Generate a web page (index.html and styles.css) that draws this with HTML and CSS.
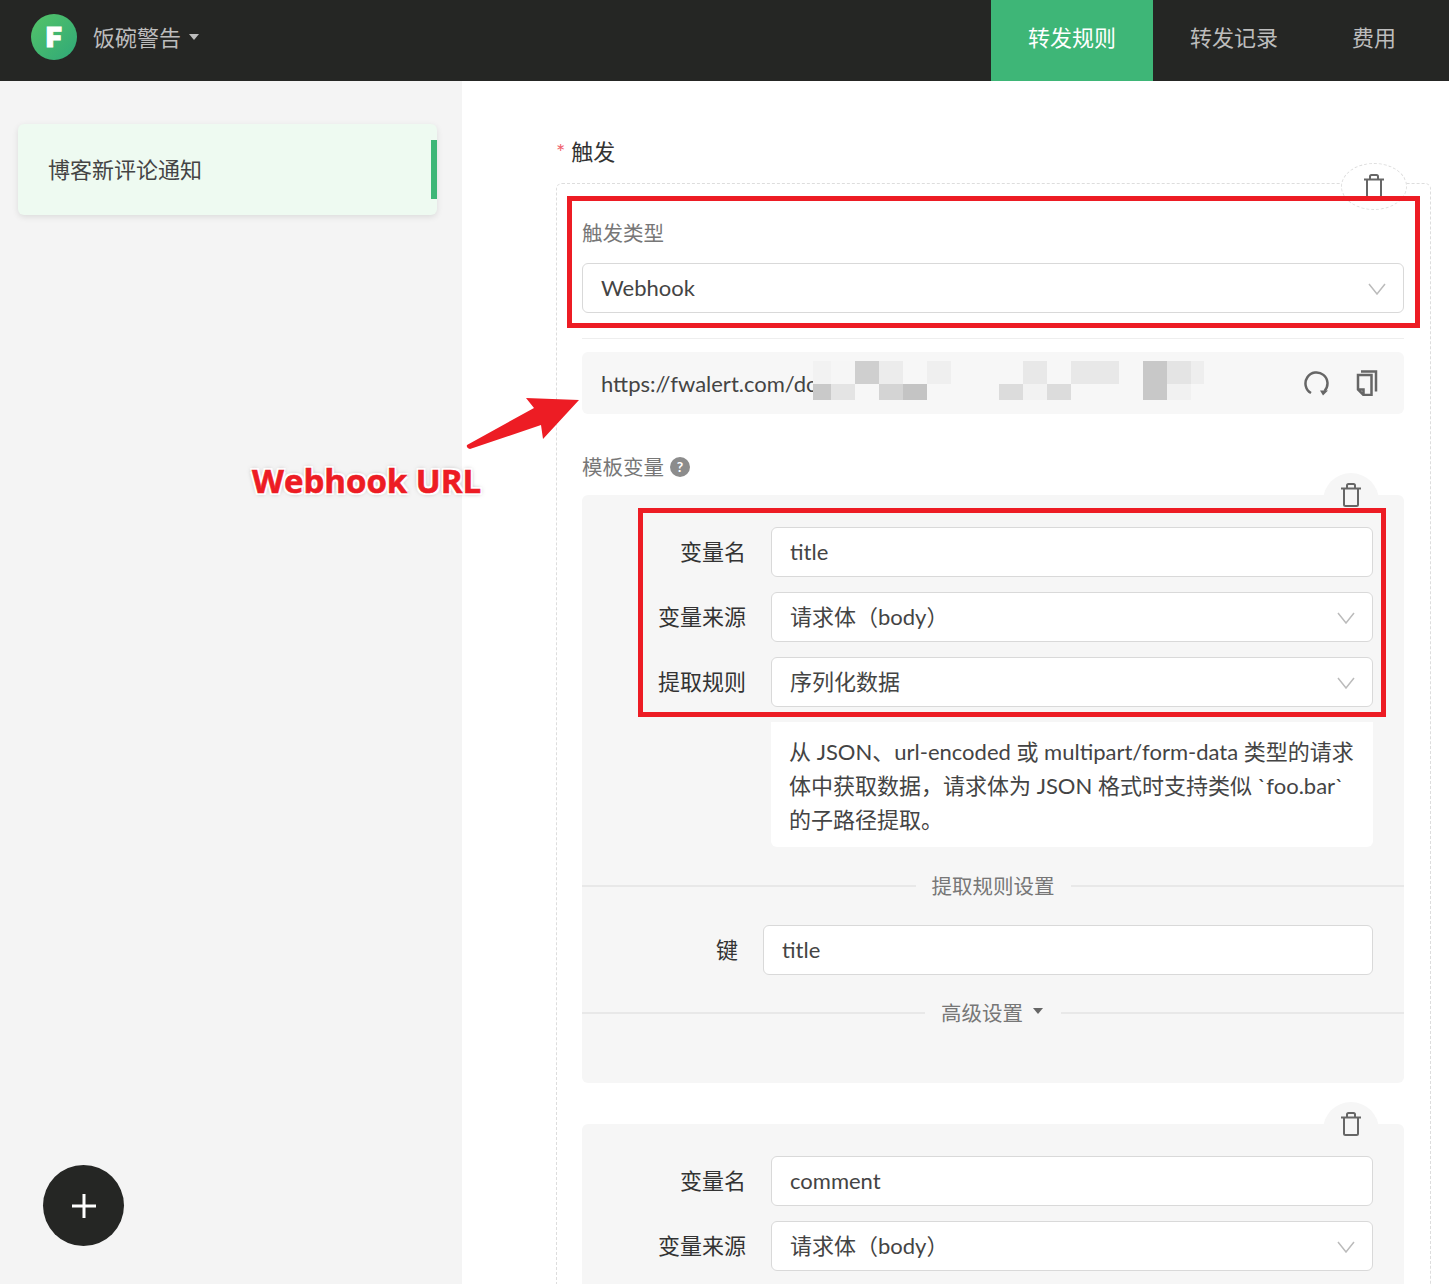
FILE: index.html
```html
<!DOCTYPE html>
<html lang="zh-CN">
<head>
<meta charset="UTF-8">
<meta name="viewport" content="width=device-width, initial-scale=1.0">
<title>饭碗警告 - 转发规则</title>
<link rel="stylesheet" href="styles.css">
</head>
<body>
<header class="topbar">
  <div class="brand">
    <span class="logo">F</span>
    <span class="brand-name">饭碗警告</span>
    <span class="caret"></span>
  </div>
  <nav class="topnav">
    <a class="active" href="#">转发规则</a>
    <a href="#">转发记录</a>
    <a href="#">费用</a>
  </nav>
</header>

<div class="layout">
  <aside class="sidebar">
    <div class="rule-card">博客新评论通知</div>
    <button class="add-btn" type="button" aria-label="add">
      <svg width="26" height="26" viewBox="0 0 26 26"><path d="M13 1v24M1 13h24" stroke="#fff" stroke-width="3" fill="none"/></svg>
    </button>
  </aside>

  <main class="content">
    <div class="section-label"><span class="required">*</span>触发</div>
    <div class="trigger-box">
      <span class="trigger-del">
        <svg class="trash" width="22" height="24" viewBox="0 0 22 24"><path d="M1 5.5h20M4 5.5v16A1.5 1.5 0 0 0 5.5 23h11a1.5 1.5 0 0 0 1.5-1.5v-16M7 5.5v-3A1.5 1.5 0 0 1 8.500 1h5A1.500 1.500 0 0 1 15 2.500v3"/></svg>
      </span>

      <div class="small-label">触发类型</div>
      <div class="control select">Webhook<svg class="chevron" width="18" height="12" viewBox="0 0 18 12"><path d="M1 1l8 10 8-10"/></svg></div>
      <div class="thin-line"></div>

      <div class="url-box">
        <span class="url-text">https://fwalert.com/dc</span>
        <svg class="mosaic" width="391" height="39" viewBox="0 0 391 39">
          <rect x="0" y="0" width="18" height="23" fill="#f2f2f2"/>
          <rect x="18" y="0" width="24" height="23" fill="#f6f6f6"/>
          <rect x="42" y="0" width="24" height="23" fill="#cfcfcf"/>
          <rect x="66" y="0" width="24" height="23" fill="#ececec"/>
          <rect x="114" y="0" width="24" height="23" fill="#efefef"/>
          <rect x="0" y="23" width="18" height="16" fill="#c9c9c9"/>
          <rect x="18" y="23" width="24" height="16" fill="#e4e4e4"/>
          <rect x="66" y="23" width="24" height="16" fill="#d4d4d4"/>
          <rect x="90" y="23" width="24" height="16" fill="#c4c4c4"/>
          <rect x="210" y="0" width="24" height="23" fill="#e8e8e8"/>
          <rect x="258" y="0" width="48" height="23" fill="#e8e8e8"/>
          <rect x="186" y="23" width="24" height="16" fill="#dcdcdc"/>
          <rect x="210" y="23" width="24" height="16" fill="#f2f2f2"/>
          <rect x="234" y="23" width="24" height="16" fill="#dcdcdc"/>
          <rect x="330" y="0" width="24" height="39" fill="#c8c8c8"/>
          <rect x="354" y="0" width="24" height="23" fill="#e4e4e4"/>
          <rect x="378" y="0" width="13" height="23" fill="#eeeeee"/>
          <rect x="354" y="23" width="24" height="16" fill="#f1f1f1"/>
        </svg>
        <span class="url-actions">
          <svg class="icon-line" width="26" height="26" viewBox="0 0 26 26"><path d="M7 23A11 11 0 1 1 20.500 21"/><path class="icon-fill" d="M16 20.500h8L19 25.500z"/></svg>
          <svg class="icon-line" width="24" height="26" viewBox="0 0 24 26"><path d="M2 5h13.500v20H7.500L2 19.500zM2 19.500h5.500V25M5 1.500h15v20"/></svg>
        </span>
      </div>

      <div class="small-label vars-label">模板变量<span class="help">?</span></div>

      <section class="var-card">
        <span class="card-del">
          <svg class="trash" width="22" height="24" viewBox="0 0 22 24"><path d="M1 5.500h20M4 5.500v16A1.500 1.500 0 0 0 5.500 23h11a1.500 1.500 0 0 0 1.500-1.500v-16M7 5.500v-3A1.500 1.500 0 0 1 8.500 1h5A1.500 1.500 0 0 1 15 2.500v3"/></svg>
        </span>
        <div class="field">
          <label>变量名</label>
          <div class="control">title</div>
        </div>
        <div class="field">
          <label>变量来源</label>
          <div class="control select">请求体（body）<svg class="chevron" width="18" height="12" viewBox="0 0 18 12"><path d="M1 1l8 10 8-10"/></svg></div>
        </div>
        <div class="field">
          <label>提取规则</label>
          <div class="control select">序列化数据<svg class="chevron" width="18" height="12" viewBox="0 0 18 12"><path d="M1 1l8 10 8-10"/></svg></div>
        </div>
        <div class="help-text">从 JSON、url-encoded 或 multipart/form-data 类型的请求<br>体中获取数据，请求体为 JSON 格式时支持类似 `foo.bar`<br>的子路径提取。</div>

        <div class="divider">提取规则设置</div>
        <div class="field key-field">
          <label>键</label>
          <div class="control">title</div>
        </div>
        <div class="divider advanced">高级设置<span class="caret small"></span></div>
      </section>

      <section class="var-card second">
        <span class="card-del">
          <svg class="trash" width="22" height="24" viewBox="0 0 22 24"><path d="M1 5.500h20M4 5.500v16A1.500 1.500 0 0 0 5.500 23h11a1.500 1.500 0 0 0 1.500-1.500v-16M7 5.500v-3A1.500 1.500 0 0 1 8.500 1h5A1.500 1.500 0 0 1 15 2.500v3"/></svg>
        </span>
        <div class="field">
          <label>变量名</label>
          <div class="control">comment</div>
        </div>
        <div class="field">
          <label>变量来源</label>
          <div class="control select">请求体（body）<svg class="chevron" width="18" height="12" viewBox="0 0 18 12"><path d="M1 1l8 10 8-10"/></svg></div>
        </div>
      </section>
    </div>
  </main>
</div>

<!-- screenshot annotations drawn on top of the page -->
<div class="mark mark-type"></div>
<div class="mark mark-var"></div>
<svg class="arrow" width="114" height="52" viewBox="0 0 114 52"><path d="M1 47L68 10 60 0 113 2 77 41 75 27 4 51Q0 50 1 47z" fill="#ed1c24"/></svg>
<div class="callout">Webhook URL</div>
</body>
</html>
```

FILE: styles.css
```css
* {
  box-sizing: border-box;
}
html, body {
  height: 100%;
}
body {
  font-family: 'Lato', 'Noto Sans CJK SC', sans-serif;
  font-size: 22px;
  color: #333;
  background-color: #fff;
  margin: 0;
  height: 1284px;
  overflow: hidden;
  position: relative;
}

/* top bar */
.topbar {
  height: 81px;
  background-color: #252624;
  display: flex;
  justify-content: space-between;
  padding-right: 15px;
}
.brand {
  display: flex;
  align-items: center;
  padding-left: 31px;
  padding-bottom: 7px;
}
.logo {
  width: 46px;
  height: 46px;
  border-radius: 50%;
  background: linear-gradient(135deg, #54c468, #2fa878);
  color: #fff;
  font-family: 'Inter', sans-serif;
  font-weight: 900;
  font-size: 27px;
  -webkit-text-stroke: 1px #fff;
  display: flex;
  align-items: center;
  justify-content: center;
}
.brand-name {
  color: #bdbdbd;
  margin-left: 16px;
  line-height: 30px;
  padding-top: 2px;
}
.caret {
  width: 0;
  height: 0;
  border-left: 5.5px solid transparent;
  border-right: 5.5px solid transparent;
  border-top: 6px solid #bdbdbd;
  margin-left: 8px;
}
.topnav {
  display: flex;
}
.topnav a {
  color: #bdbdbd;
  text-decoration: none;
  padding: 0 37px;
  line-height: 76px;
  height: 81px;
}
.topnav a:last-child {
  padding: 0 38px 0 37px;
}
.topnav a.active {
  background-color: #3eb677;
  color: #fff;
}

/* layout */
.layout {
  display: flex;
  height: 1203px;
}
.sidebar {
  width: 462px;
  flex-shrink: 0;
  background-color: #f4f4f4;
  padding: 43px 25px 0 18px;
  position: relative;
}
.rule-card {
  height: 91px;
  background-color: #eefaf1;
  border-radius: 6px;
  padding-left: 30px;
  line-height: 92px;
  color: #444;
  box-shadow: 0 2px 6px rgba(0, 0, 0, 0.1);
  position: relative;
}
.rule-card::after {
  content: "";
  position: absolute;
  right: 0;
  top: 16px;
  width: 6px;
  height: 59px;
  background-color: #3eb677;
}
.add-btn {
  position: absolute;
  left: 43px;
  top: 1084px;
  width: 81px;
  height: 81px;
  border: 0;
  border-radius: 50%;
  background-color: #252624;
  display: flex;
  align-items: center;
  justify-content: center;
  padding: 0;
}

/* form */
.content {
  flex: 1;
  padding: 56px 18px 0 94px;
}
.section-label {
  height: 30px;
  line-height: 30px;
  margin-bottom: 16px;
}
.required {
  color: #f0616d;
  font-size: 22px;
  line-height: 1;
  margin-right: 6px;
}
.trigger-box {
  border: 1px dashed #ddd;
  border-radius: 6px;
  padding: 34px 26px 0 25px;
  position: relative;
  height: 1200px;
}
.trigger-del {
  position: absolute;
  right: 23px;
  top: -21px;
  width: 66px;
  height: 47px;
  background-color: #fff;
  border: 1px dashed #ddd;
  border-radius: 50%;
  display: flex;
  justify-content: center;
  padding-top: 10px;
}
.trash {
  fill: none;
  stroke: #666;
  stroke-width: 2;
}
.small-label {
  font-size: 20.500px;
  color: #777;
  line-height: 30px;
  margin-bottom: 15px;
}
.control {
  height: 50px;
  background-color: #fff;
  border: 1px solid #d9d9d9;
  border-radius: 6px;
  padding: 0 18px;
  line-height: 48px;
  color: #444;
  flex: 1;
  position: relative;
}
.chevron {
  position: absolute;
  right: 17px;
  top: 19px;
  fill: none;
  stroke: #bbb;
  stroke-width: 1.5;
}
.thin-line {
  height: 1px;
  background-color: #eee;
  margin: 25px 0 13px;
}

.url-box {
  height: 62px;
  background-color: #f7f7f7;
  border-radius: 6px;
  padding: 0 19px;
  display: flex;
  justify-content: space-between;
  align-items: center;
  position: relative;
  color: #444;
}
.url-text {
  display: block;
  line-height: 30px;
  padding-top: 2px;
  white-space: nowrap;
}
.mosaic {
  position: absolute;
  left: 231px;
  top: 9px;
}
.url-actions {
  display: flex;
  align-items: center;
  gap: 26px;
  margin-right: 5px;
}
.icon-line {
  fill: none;
  stroke: #666;
  stroke-width: 2.500;
}
.icon-fill {
  fill: #666;
  stroke: none;
}

.vars-label {
  margin: 38px 0 13px;
  display: flex;
  align-items: center;
}
.help {
  width: 20px;
  height: 20px;
  border-radius: 50%;
  background-color: #8c8c8c;
  color: #fff;
  font-size: 14px;
  font-weight: 700;
  line-height: 20px;
  text-align: center;
  margin-left: 6px;
}

.var-card {
  background-color: #f6f6f6;
  border-radius: 6px;
  padding: 32px 31px 55px 0;
  position: relative;
}
.var-card.second {
  margin-top: 41px;
}
.card-del {
  position: absolute;
  right: 25px;
  top: -22px;
  width: 56px;
  height: 46px;
  background-color: #f6f6f6;
  border-radius: 28px 28px 0 0;
  display: flex;
  justify-content: center;
  padding-top: 10px;
}
.field {
  display: flex;
  align-items: center;
  margin-bottom: 15px;
}
.field label {
  width: 164px;
  margin-right: 25px;
  text-align: right;
  padding-bottom: 4px;
}
.help-text {
  margin-left: 189px;
  background-color: #fff;
  border-radius: 0 0 6px 6px;
  padding: 13px 18px 10px;
  line-height: 34px;
  height: 125px;
  color: #444;
  white-space: nowrap;
}
.divider {
  display: flex;
  align-items: center;
  font-size: 20.500px;
  color: #777;
  line-height: 30px;
  margin: 24px -31px 24px 0;
  gap: 16px;
}
.divider::before, .divider::after {
  content: "";
  flex: 1;
  height: 2px;
  background-color: #e8e8e8;
}
.divider.advanced {
  margin: 23px -31px 0 0;
}
.caret.small {
  border-top-color: #666;
  margin: -4px 2px 0 -6px;
}
.key-field {
  margin-bottom: 0;
}
.key-field label {
  width: 156px;
}

/* annotations */
.mark {
  position: absolute;
  border: 5px solid #ed1c24;
}
.mark-type {
  left: 567px;
  top: 196px;
  width: 853px;
  height: 132px;
}
.mark-var {
  left: 638px;
  top: 508px;
  width: 748px;
  height: 209px;
}
.arrow {
  position: absolute;
  left: 466px;
  top: 398px;
}
.callout {
  position: absolute;
  left: 252px;
  top: 458px;
  font-family: 'Open Sans', sans-serif;
  font-weight: 700;
  font-size: 33px;
  line-height: 46px;
  color: #ed1c24;
  -webkit-text-stroke: 0.6px #ed1c24;
  text-shadow: -2px -2px 1px #fff, 2px -2px 1px #fff, -2px 2px 1px #fff, 2px 2px 1px #fff, 0 0 5px rgba(0, 0, 0, 0.55);
}
```
